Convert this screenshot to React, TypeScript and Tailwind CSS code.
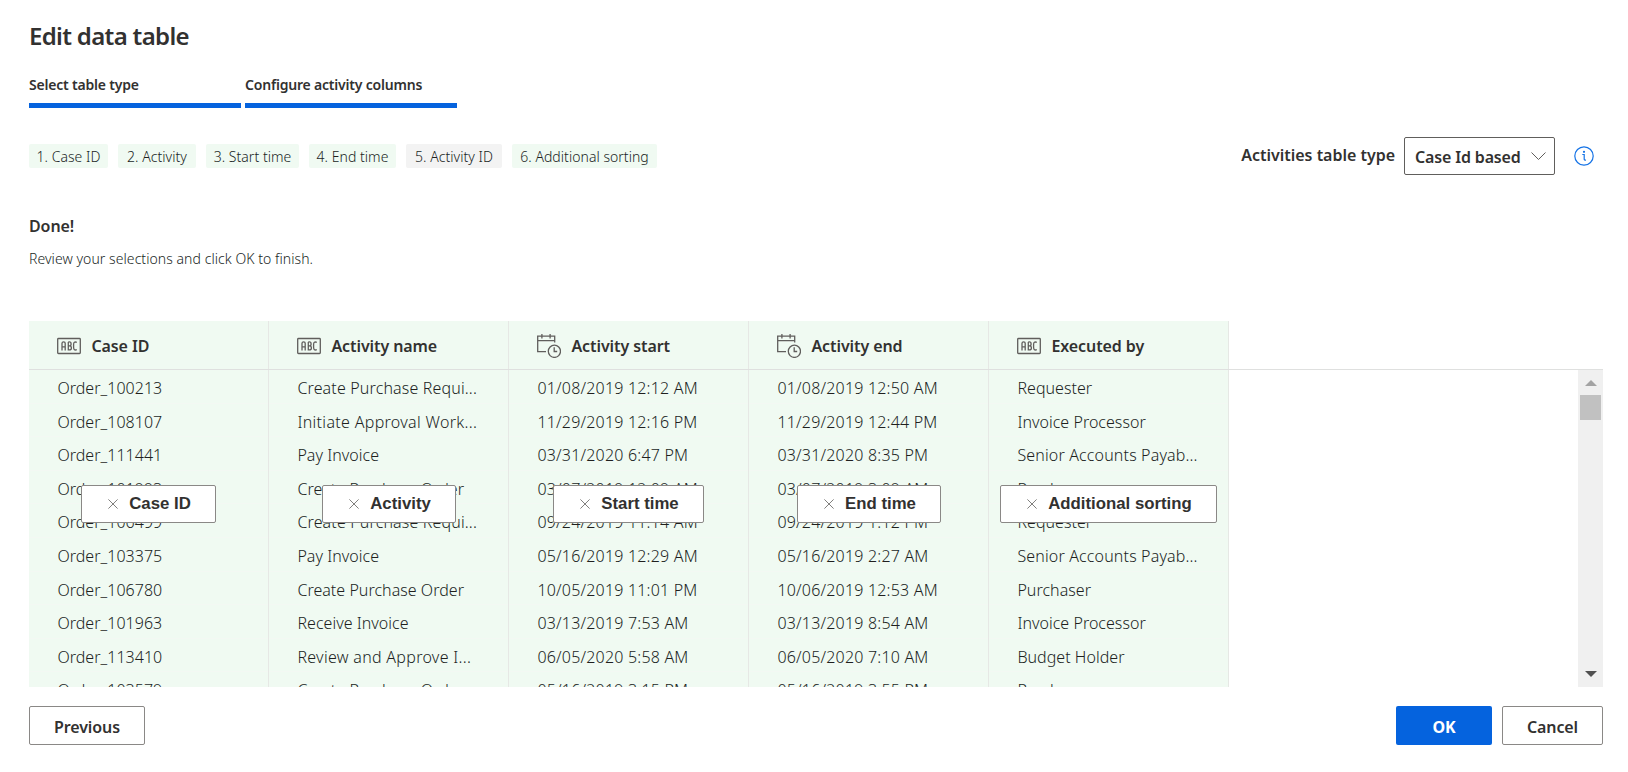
import React from "react";

type Kind = "text" | "date";

const columns: { title: string; kind: Kind; tag: string; tagBox: string; rows: string[] }[] = [
  {
    title: "Case ID",
    kind: "text",
    tag: "Case ID",
    tagBox: "left-[52px] w-[135px]",
    rows: ["Order_100213", "Order_108107", "Order_111441", "Order_101993", "Order_106499", "Order_103375", "Order_106780", "Order_101963", "Order_113410", "Order_103579"],
  },
  {
    title: "Activity name",
    kind: "text",
    tag: "Activity",
    tagBox: "left-[293px] w-[134px]",
    rows: ["Create Purchase Requi...", "Initiate Approval Work...", "Pay Invoice", "Create Purchase Order", "Create Purchase Requi...", "Pay Invoice", "Create Purchase Order", "Receive Invoice", "Review and Approve I...", "Create Purchase Order"],
  },
  {
    title: "Activity start",
    kind: "date",
    tag: "Start time",
    tagBox: "left-[524px] w-[151px]",
    rows: ["01/08/2019 12:12 AM", "11/29/2019 12:16 PM", "03/31/2020 6:47 PM", "03/07/2019 12:09 AM", "09/24/2019 11:14 AM", "05/16/2019 12:29 AM", "10/05/2019 11:01 PM", "03/13/2019 7:53 AM", "06/05/2020 5:58 AM", "05/16/2019 3:15 PM"],
  },
  {
    title: "Activity end",
    kind: "date",
    tag: "End time",
    tagBox: "left-[768px] w-[144px]",
    rows: ["01/08/2019 12:50 AM", "11/29/2019 12:44 PM", "03/31/2020 8:35 PM", "03/07/2019 3:09 AM", "09/24/2019 1:12 PM", "05/16/2019 2:27 AM", "10/06/2019 12:53 AM", "03/13/2019 8:54 AM", "06/05/2020 7:10 AM", "05/16/2019 3:55 PM"],
  },
  {
    title: "Executed by",
    kind: "text",
    tag: "Additional sorting",
    tagBox: "left-[971px] w-[217px]",
    rows: ["Requester", "Invoice Processor", "Senior Accounts Payab...", "Purchaser", "Requester", "Senior Accounts Payab...", "Purchaser", "Invoice Processor", "Budget Holder", "Purchaser"],
  },
];

const steps = [
  { label: "1. Case ID", box: "w-[79px] bg-[#f0faf2]" },
  { label: "2. Activity", box: "w-[78px] bg-[#f0faf2]" },
  { label: "3. Start time", box: "w-[93px] bg-[#f0faf2]" },
  { label: "4. End time", box: "w-[87px] bg-[#f0faf2]" },
  { label: "5. Activity ID", box: "w-[96px] bg-[#f3f3f3]" },
  { label: "6. Additional sorting", box: "w-[145px] bg-[#f0faf2]" },
];

function rowTracking(text: string, kind: Kind) {
  if (kind === "date") return "tracking-[0.2px]";
  if (text.startsWith("Initiate")) return "tracking-[0.32px]";
  if (text.startsWith("Review")) return "tracking-[0.3px]";
  if (text.endsWith("...")) return "tracking-[0.15px]";
  return "tracking-[0.03px]";
}

function TextIcon() {
  return (
    <svg className="h-6 w-6 shrink-0" viewBox="0 0 24 24" fill="none" stroke="#605e5c" strokeWidth="1.3">
      <rect x="0.7" y="4.5" width="22.6" height="15" rx="0.8" />
      <path d="M5 16.5V9.3Q5 7.9 6.6 7.9T8.2 9.3v7.2M5 12.9h3.2M11.3 7.9v8h1.1q2 0 2-2t-2-2h-1.1M11.3 7.9h1.1q1.7 0 1.7 2t-1.7 2M19.8 8.3q-3.2-1.2-3.2 2.2v2.8q0 3.6 3.2 2.4" />
    </svg>
  );
}

function DateIcon() {
  return (
    <svg className="h-6 w-6 shrink-0" viewBox="0 0 24 24" fill="none" stroke="#605e5c" strokeWidth="1.3">
      <path d="M9 17.6H.7V2.2h17v6.3M.7 6.6h17M4.9 0v4.4M13.1 0v4.4" />
      <circle cx="17.4" cy="17.3" r="6.1" />
      <path d="M17.2 13.3v4.2h3" />
    </svg>
  );
}

function CloseIcon() {
  return (
    <svg className="h-[10px] w-[10px]" viewBox="0 0 10 10" stroke="#605e5c" strokeWidth="0.8">
      <path d="M.4.4l9.2 9.2M9.6.4L.4 9.6" />
    </svg>
  );
}

export default function App() {
  return (
    <div className="flex h-[772px] w-[1628px] flex-col overflow-hidden bg-white pr-[25px] pl-[29px] font-['Noto_Sans',sans-serif] text-[#323130]">
      <h1 className="mt-[18px] h-9 text-[24px] leading-9 font-semibold tracking-[-0.67px]">Edit data table</h1>

      <div className="mt-5 flex gap-1">
        {["Select table type", "Configure activity columns"].map((label) => (
          <div key={label} className="h-[34px] w-[212px] border-b-[5px] border-[#0563de] text-[14px] leading-[22px] font-semibold tracking-[-0.2px] whitespace-nowrap">
            {label}
          </div>
        ))}
      </div>

      <div className="mt-[29px] flex h-[38px] items-center">
        <div className="flex gap-[10px]">
          {steps.map((s) => (
            <div key={s.label} className={`h-6 rounded-[2px] text-center text-[14px] leading-[26px] font-light tracking-[0.04px] whitespace-nowrap text-[#201f1e] ${s.box}`}>
              {s.label}
            </div>
          ))}
        </div>
        <div className="ml-auto flex items-center pr-[9px]">
          <span className="mr-[9px] -mt-0.5 text-[16px] font-semibold tracking-[-0.02px]">Activities table type</span>
          <div className="flex h-[38px] w-[151px] items-center rounded-[2px] border border-[#605e5c] pt-[2px] pl-[10px] text-[16px] font-semibold tracking-[-0.16px] whitespace-nowrap">
            <span className="w-[106px]">Case Id based</span>
            <svg className="-mt-0.5 ml-[10px] h-2 w-[15px] shrink-0" viewBox="0 0 15 8" fill="none" stroke="#605e5c">
              <path d="M.5.5l7 7 7-7" />
            </svg>
          </div>
          <svg className="ml-[19px] h-5 w-5" viewBox="0 0 20 20" fill="none" stroke="#1573e6" strokeWidth="1.2">
            <circle cx="10" cy="10" r="9.2" />
            <path d="M8.3 8.5h1.9v4.7q0 1 1.8.8" />
            <circle cx="10" cy="5.8" r=".5" fill="#1573e6" />
          </svg>
        </div>
      </div>

      <h2 className="mt-[39px] h-6 text-[16px] leading-6 font-semibold tracking-[-0.1px]">Done!</h2>
      <p className="mt-[11px] h-5 text-[14px] leading-5 font-light tracking-[0.06px] text-[#201f1e]">Review your selections and click OK to finish.</p>

      <div className="relative mt-[52px] h-[366px] shrink-0 overflow-hidden">
        <div className="flex h-[49px] border-b border-[#dfe0df]">
          {columns.map((c) => (
            <div key={c.title} className="flex w-[240px] items-center border-r border-[#e6e8e5] bg-[#f0faf2] pt-px pl-[28.4px]">
              {c.kind === "text" ? <TextIcon /> : <DateIcon />}
              <span className="ml-[10px] pt-px text-[16px] font-semibold tracking-[-0.08px] whitespace-nowrap">{c.title}</span>
            </div>
          ))}
        </div>
        <div className="flex h-[317px]">
          {columns.map((c) => (
            <div key={c.title} className="w-[240px] border-r border-[#e6e8e5] bg-[#f0faf2]">
              {c.rows.map((r, i) => (
                <div key={i} className={`h-[33.6px] border-b border-[#f3f8f3] pt-[2px] pl-[28.4px] text-[16px] leading-[32px] font-light whitespace-nowrap text-[#201f1e] ${rowTracking(r, c.kind)}`}>
                  {r}
                </div>
              ))}
            </div>
          ))}
          <div className="ml-auto flex w-[25px] flex-col items-center bg-[#f0f0f0]">
            <svg className="mt-[10px] h-[6px] w-3" viewBox="0 0 12 6" fill="#a3a3a3">
              <path d="M0 6l6-6 6 6z" />
            </svg>
            <div className="mt-[9px] h-[25px] w-[21px] bg-[#c1c1c1]" />
            <svg className="mt-auto mb-[10px] h-[6px] w-3" viewBox="0 0 12 6" fill="#505050">
              <path d="M0 0l6 6 6-6z" />
            </svg>
          </div>
        </div>
        {columns.map((c) => (
          <button key={c.title} className={`absolute top-[164px] flex h-[38px] items-center justify-center gap-[11px] rounded-[2px] border border-[#8a8886] bg-white pl-[2px] font-['Liberation_Sans',sans-serif] text-[16.8px] font-bold whitespace-nowrap ${c.tagBox}`}>
            <CloseIcon />
            {c.tag}
          </button>
        ))}
      </div>

      <div className="mt-[19px] flex h-[39px] shrink-0 gap-[10px] text-[16px] font-semibold tracking-[-0.1px]">
        <button className="mr-auto w-[116px] rounded-[2px] border border-[#8a8886] pt-[3px]">Previous</button>
        <button className="w-24 rounded-[2px] bg-[#0563de] pt-[3px] font-bold text-white">OK</button>
        <button className="w-[101px] rounded-[2px] border border-[#8a8886] pt-[3px]">Cancel</button>
      </div>
    </div>
  );
}
